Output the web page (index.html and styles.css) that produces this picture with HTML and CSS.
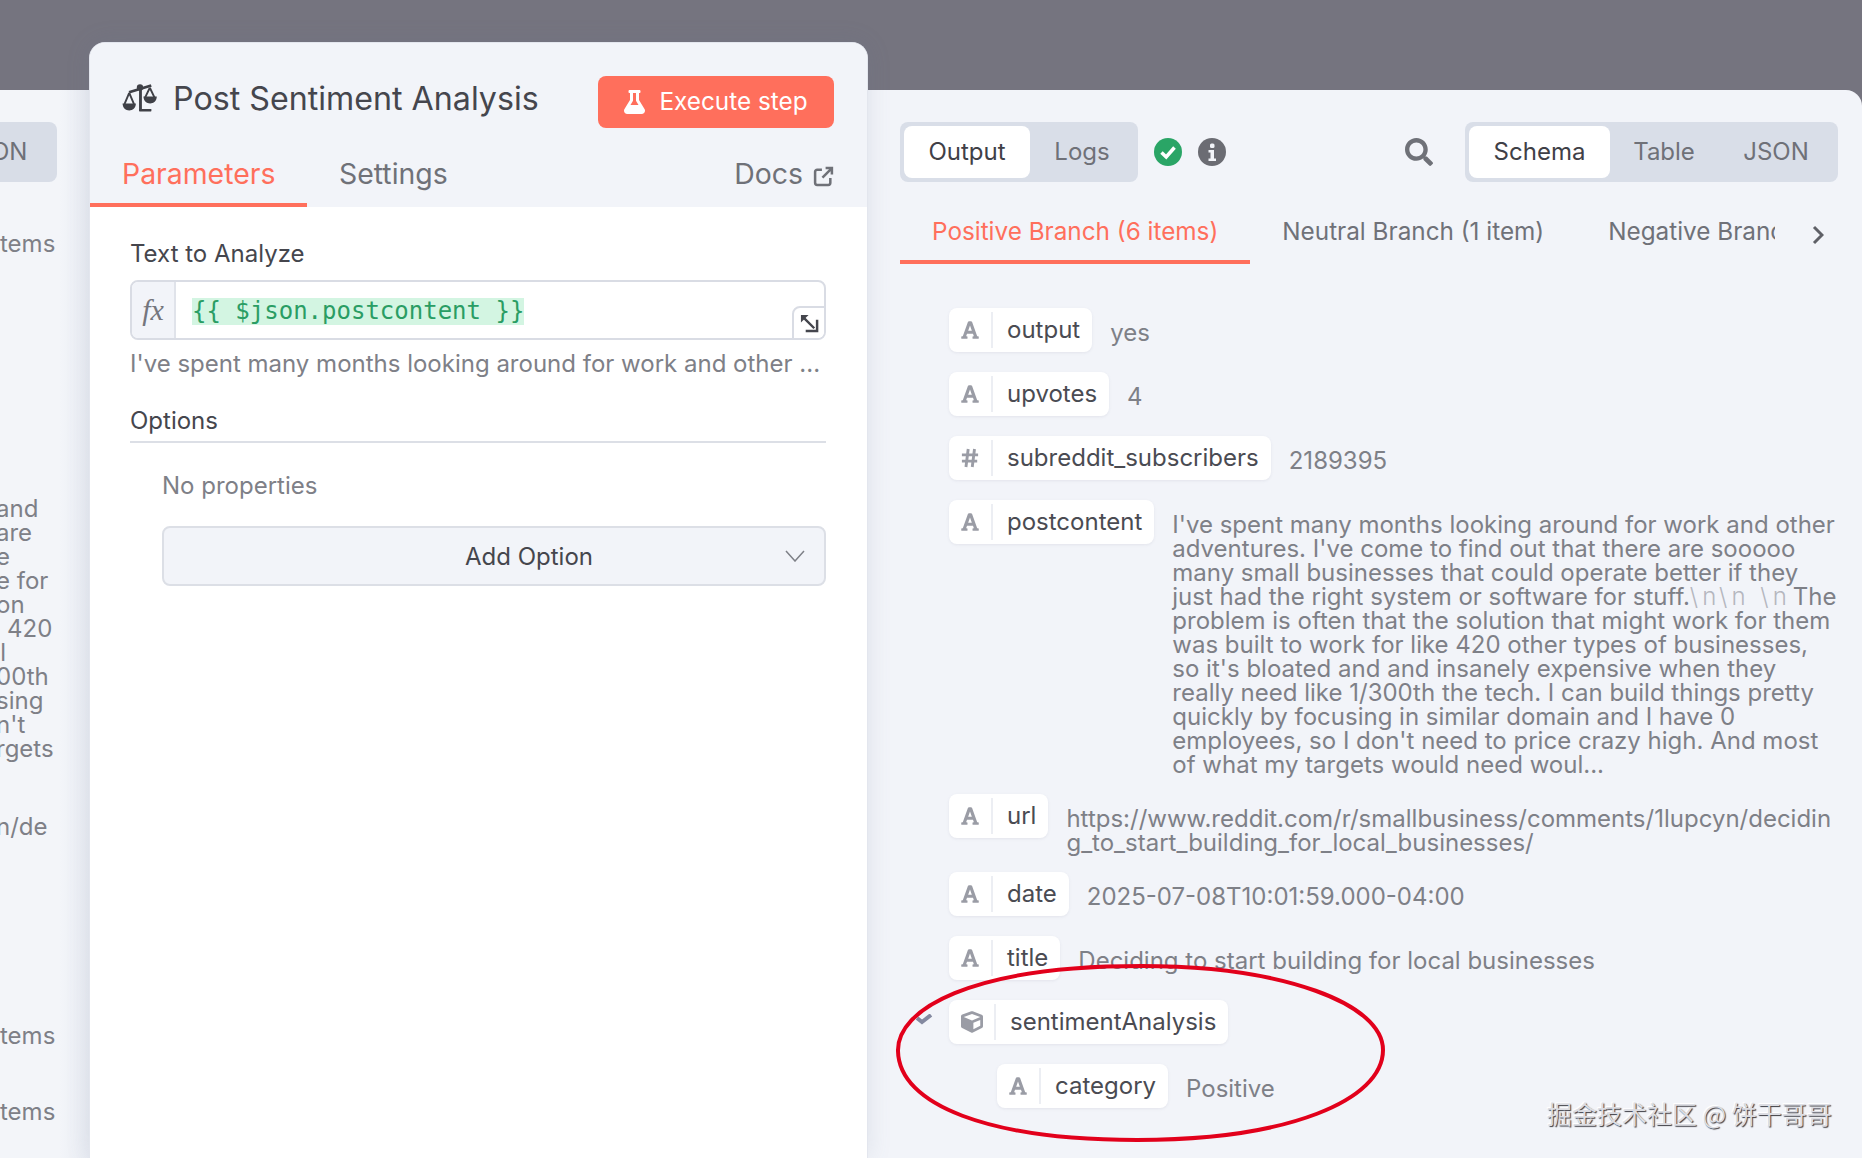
FILE: index.html
```html
<!DOCTYPE html>
<html lang="en">
<head>
<meta charset="utf-8">
<title>Post Sentiment Analysis</title>
<link rel="stylesheet" href="styles.css">
</head>
<body>
<svg class="defs" width="0" height="0" aria-hidden="true">
  <symbol id="i-font" viewBox="0 0 448 512"><path d="M432 416h-23.41L277.88 53.69A32 32 0 0 0 247.58 32h-47.16a32 32 0 0 0-30.3 21.69L39.41 416H16a16 16 0 0 0-16 16v32a16 16 0 0 0 16 16h128a16 16 0 0 0 16-16v-32a16 16 0 0 0-16-16h-19.58l23.3-64h152.56l23.3 64H304a16 16 0 0 0-16 16v32a16 16 0 0 0 16 16h128a16 16 0 0 0 16-16v-32a16 16 0 0 0-16-16zM176.85 272L224 142.51 271.15 272z"/></symbol>
  <symbol id="i-hash" viewBox="0 0 20 22"><path d="M8 1 5.500 21M15 1 12.500 21M1 7.500H19M1 14.500H18" fill="none" stroke="currentColor" stroke-width="3.200"/></symbol>
  <symbol id="i-cube" viewBox="0 0 512 512"><path d="M239.100 6.300l-208 78c-18.700 7-31.100 25-31.100 45v225.100c0 18.200 10.300 34.800 26.500 42.900l208 104c13.500 6.800 29.400 6.800 42.900 0l208-104c16.300-8.100 26.500-24.800 26.500-42.900V129.300c0-20-12.400-37.900-31.100-44.900l-208-78C262 2.200 250 2.200 239.100 6.300zM256 68.400l192 72v1.100l-192 78-192-78v-1.100l192-72zm32 356V275.500l160-65v133.900l-160 80z"/></symbol>
</svg>

<div class="app">
  <aside class="left">
    <div class="left-pill"><span>ON</span></div>
    <div class="left-frag items-1">tems</div>
    <div class="left-lines">and
are
e
e for
on
 &thinsp;420
&thinsp;l
00th
sing
n't
rgets</div>
    <div class="left-frag path">n/de</div>
    <div class="left-frag items-2">tems</div>
    <div class="left-frag items-3">tems</div>
  </aside>

  <section class="center">
    <header class="center-head">
      <div class="title-row">
        <div class="title">
          <svg class="scale-icon" viewBox="0 0 120 96" aria-hidden="true">
            <path d="M24 24 94 3 97 11 27 32Z"/>
            <circle cx="60" cy="13" r="10"/>
            <rect x="57" y="14" width="9" height="72"/>
            <rect x="57" y="81" width="39" height="8" rx="2"/>
            <path class="scale-line" d="M26 30 11 66M26 30 41 66M91 14 76 45M91 14 106 45"/>
            <path d="M5 64H47C47 93 5 93 5 64ZM71 42H113C113 71 71 71 71 42Z"/>
          </svg>
          <span>Post Sentiment Analysis</span>
        </div>
        <button class="exec-btn">
          <svg class="flask" viewBox="0 0 448 512" aria-hidden="true"><path d="M437.200 403.500L320 215V64h8c13.300 0 24-10.700 24-24V24c0-13.300-10.700-24-24-24H120c-13.300 0-24 10.700-24 24v16c0 13.300 10.700 24 24 24h8v151L10.800 403.500C-18.500 450.600 15.300 512 70.900 512h306.200c55.700 0 89.400-61.500 60.100-108.500zM137.900 320l48.200-77.600c3.700-5.200 5.800-11.600 5.800-18.400V64h64v160c0 6.900 2.200 13.200 5.800 18.400l48.200 77.600h-172z"/></svg>
          <span>Execute step</span>
        </button>
      </div>
      <nav class="center-tabs">
        <span class="ctab active">Parameters</span>
        <span class="ctab">Settings</span>
        <span class="docs">Docs
          <svg class="ext" viewBox="0 0 20 20" aria-hidden="true"><path d="M8.500 3.500H4A2 2 0 0 0 2 5.500V16A2 2 0 0 0 4 18H14.500A2 2 0 0 0 16.500 16V11.500M9 11 18 2M12 2H18V8"/></svg>
        </span>
      </nav>
    </header>
    <div class="center-body">
      <label class="field-label">Text to Analyze</label>
      <div class="expr">
        <div class="fx">fx</div>
        <div class="expr-value"><span class="expr-code">{{ $json.postcontent }}</span></div>
        <div class="expand">
          <svg viewBox="0 0 20 20" aria-hidden="true"><path class="exp-head" d="M1 1H9L1 9Z"/><path d="M3 3 15 15M18 6V18H6"/></svg>
        </div>
      </div>
      <div class="hint">I've spent many months looking around for work and other ...</div>
      <div class="options-title">Options</div>
      <div class="options-body">
        <div class="no-props">No properties</div>
        <div class="add-option">
          <span>Add Option</span>
          <svg class="caret" viewBox="0 0 20 12" aria-hidden="true"><path d="M1 1 10 11 19 1"/></svg>
        </div>
      </div>
    </div>
  </section>

  <section class="right">
    <div class="toolbar">
      <div class="seg">
        <span class="seg-item on seg-output">Output</span>
        <span class="seg-item seg-logs">Logs</span>
      </div>
      <svg class="status" viewBox="0 0 28 28" aria-hidden="true"><circle class="ok" cx="14" cy="14" r="14"/><path class="tick" d="M7.500 14.500 12.200 19 20.500 9.500"/></svg>
      <svg class="status info" viewBox="0 0 28 28" aria-hidden="true"><circle cx="14" cy="14" r="14"/><rect class="dot" x="12" y="5.500" width="4.500" height="4.500" rx="1.500"/><path class="dot" d="M10.500 12h5.500v8.500h2v2.500h-7.500v-2.500h2v-6h-2Z"/></svg>
      <svg class="search" viewBox="0 0 512 512" aria-hidden="true"><path d="M505 442.700L405.300 343c-4.500-4.500-10.600-7-17-7H372c27.600-35.300 44-79.700 44-128C416 93.100 322.900 0 208 0S0 93.100 0 208s93.100 208 208 208c48.300 0 92.700-16.400 128-44v16.300c0 6.400 2.500 12.500 7 17l99.700 99.700c9.400 9.400 24.600 9.400 33.900 0l28.300-28.300c9.400-9.400 9.400-24.600.1-34zM208 336c-70.700 0-128-57.200-128-128 0-70.700 57.200-128 128-128 70.700 0 128 57.200 128 128 0 70.700-57.200 128-128 128z"/></svg>
      <div class="seg">
        <span class="seg-item on seg-schema">Schema</span>
        <span class="seg-item seg-table">Table</span>
        <span class="seg-item seg-json">JSON</span>
      </div>
    </div>

    <div class="branches">
      <span class="branch active">Positive Branch (6 items)</span>
      <div class="branch-clip">
        <span class="branch">Neutral Branch (1 item)</span>
        <span class="branch">Negative Branch (3 items)</span>
      </div>
      <svg class="branch-next" viewBox="0 0 12 20" aria-hidden="true"><path d="M2 2 10 10 2 18"/></svg>
    </div>

    <div class="schema">
      <div class="row">
        <div class="key"><span class="key-icon"><svg><use href="#i-font"/></svg></span><span class="key-name">output</span></div>
        <div class="val">yes</div>
      </div>
      <div class="row">
        <div class="key"><span class="key-icon"><svg><use href="#i-font"/></svg></span><span class="key-name">upvotes</span></div>
        <div class="val">4</div>
      </div>
      <div class="row">
        <div class="key"><span class="key-icon"><svg><use href="#i-hash"/></svg></span><span class="key-name">subreddit_subscribers</span></div>
        <div class="val">2189395</div>
      </div>
      <div class="row">
        <div class="key"><span class="key-icon"><svg><use href="#i-font"/></svg></span><span class="key-name">postcontent</span></div>
        <div class="val">I've spent many months looking around for work and other adventures. I've come to find out that there are sooooo many small businesses that could operate better if they just had the right system or software for stuff.<span class="nl">\n\n \n</span>The problem is often that the solution that might work for them was built to work for like 420 other types of businesses, so it's bloated and and insanely expensive when they really need like 1/300th the tech. I can build things pretty quickly by focusing in similar domain and I have 0 employees, so I don't need to price crazy high. And most of what my targets would need woul...</div>
      </div>
      <div class="row">
        <div class="key"><span class="key-icon"><svg><use href="#i-font"/></svg></span><span class="key-name">url</span></div>
        <div class="val breakall">https://www.reddit.com/r/smallbusiness/comments/1lupcyn/deciding_to_start_building_for_local_businesses/</div>
      </div>
      <div class="row">
        <div class="key"><span class="key-icon"><svg><use href="#i-font"/></svg></span><span class="key-name">date</span></div>
        <div class="val">2025-07-08T10:01:59.000-04:00</div>
      </div>
      <div class="row">
        <div class="key"><span class="key-icon"><svg><use href="#i-font"/></svg></span><span class="key-name">title</span></div>
        <div class="val">Deciding to start building for local businesses</div>
      </div>
      <div class="row object">
        <svg class="toggle" viewBox="0 0 17 11" aria-hidden="true"><path d="M1 4 6 8 15 1"/></svg>
        <div class="key"><span class="key-icon wide"><svg><use href="#i-cube"/></svg></span><span class="key-name">sentimentAnalysis</span></div>
      </div>
      <div class="row nested">
        <div class="key"><span class="key-icon"><svg><use href="#i-font"/></svg></span><span class="key-name">category</span></div>
        <div class="val">Positive</div>
      </div>
    </div>
  </section>
</div>

<svg class="annotation" viewBox="0 0 500 190" aria-hidden="true"><path d="M9 91C8 50 80 6 252 6C395 6 494 44 494 90C494 140 400 180 248 180C100 180 10 145 9 91Z"/></svg>
<div class="watermark">掘金技术社区 @ 饼干哥哥</div>
</body>
</html>
```
FILE: styles.css
```css
* { box-sizing: border-box; }
html, body { margin: 0; height: 100%; }
body {
  position: relative;
  width: 1862px;
  height: 1158px;
  overflow: hidden;
  background: #75747f;
  font-family: Inter, "Noto Sans", sans-serif;
  font-size: 24px;
  color: #4a4b52;
}
.defs { position: absolute; }
.app {
  display: grid;
  grid-template-columns: 89px 779px 1fr;
  height: 1158px;
}

/* left strip */
.left {
  margin-top: 90px;
  background: linear-gradient(90deg, #f3f5f9 0, #f3f5f9 60px, #e9ecf3 89px);
  overflow: hidden;
  color: #7e8087;
  line-height: 24px;
  display: flex;
  flex-direction: column;
}
.left-pill {
  margin: 32px 32px 0 -20px;
  height: 60px;
  border-radius: 8px;
  background: #d8dde7;
  padding-left: 20px;
  display: flex;
  align-items: center;
  flex: none;
}
.left-pill span { margin-left: -9px; color: #6f7178; }
.left-frag { white-space: pre; flex: none; }
.items-1 { margin-top: 50px; }
.left-lines { margin: 241px 0 0 -4px; white-space: pre; flex: none; }
.path { margin-top: 54px; margin-left: -4px; }
.items-2 { margin-top: 185px; }
.items-3 { margin-top: 52px; }

/* center */
.center {
  margin-top: 42px;
  background: #fff;
  border: 1px solid #e3e6ee;
  border-bottom: 0;
  border-radius: 16px 16px 0 0;
  display: flex;
  flex-direction: column;
  box-shadow: 0 0 24px rgba(100, 110, 140, .14);
  position: relative;
  z-index: 1;
}
.center-head { background: #f2f4f9; border-radius: 15px 15px 0 0; height: 164px; flex: none; }
.title-row {
  display: flex;
  justify-content: space-between;
  padding: 33px 33px 0 32px;
}
.title { display: flex; align-items: center; gap: 14px; height: 44px; font-size: 32.200px; color: #45464d; }
.scale-icon { width: 38px; height: 31px; margin-left: -1px; fill: #3f4047; }
.scale-line { fill: none; stroke: #3f4047; stroke-width: 6; }
.exec-btn {
  width: 236px;
  height: 52px;
  border: 0;
  border-radius: 8px;
  background: #ff6f5c;
  color: #fff;
  font: inherit;
  font-size: 24.300px;
  display: flex;
  align-items: center;
  justify-content: center;
  gap: 14px;
}
.exec-btn span { margin-top: -2px; }
.flask { width: 21px; height: 24px; fill: #fff; }
.center-tabs { display: flex; align-items: flex-start; margin-top: 26px; font-size: 28.400px; color: #6f7178; height: 53px; }
.ctab { height: 53px; line-height: 40px; }
.ctab.active { color: #ff6f5c; padding: 0 32px; width: 217px; border-bottom: 4px solid #ff6f5c; }
.ctab:not(.active) { margin-left: 32px; }
.docs { margin-left: auto; margin-right: 33px; line-height: 40px; display: flex; align-items: center; gap: 10px; }
.ext { width: 21px; height: 21px; margin-top: 5px; fill: none; stroke: #6f7178; stroke-width: 2.400; }

.center-body { padding: 31px 41px 0 40px; }
.field-label { display: block; line-height: 32px; color: #45464d; }
.expr {
  display: flex;
  margin-top: 10px;
  height: 60px;
  border: 2px solid #d9dce4;
  border-radius: 8px;
  position: relative;
  overflow: hidden;
}
.fx {
  width: 44px;
  background: #f2f4f9;
  border-right: 2px solid #e0e3ea;
  font-family: "Liberation Serif", serif;
  font-style: italic;
  font-size: 30px;
  color: #75767d;
  display: flex;
  align-items: center;
  justify-content: center;
}
.expr-value { padding: 14px 0 0 16px; flex: 1; }
.expr-code {
  display: inline-block;
  height: 27px;
  line-height: 27px;
  background: #d3f5e2;
  color: #2a9d64;
  font-family: "DejaVu Sans Mono", monospace;
  font-size: 24px;
}
.expand {
  position: absolute;
  right: -2px;
  bottom: -2px;
  width: 34px;
  height: 34px;
  background: #fff;
  border: 2px solid #d9dce4;
  border-radius: 8px 0 0 0;
  display: flex;
  align-items: center;
  justify-content: center;
}
.expand svg { width: 19px; height: 19px; fill: none; stroke: #45464d; stroke-width: 2.600; }
.expand .exp-head { fill: #45464d; stroke: none; }
.hint { margin-top: 10px; line-height: 28px; color: #7e8087; }
.options-title { margin-top: 27px; line-height: 32px; padding-bottom: 4px; border-bottom: 2px solid #dcdfe6; color: #45464d; }
.options-body { padding: 23px 0 0 32px; }
.no-props { line-height: 40px; color: #7e8087; }
.add-option {
  margin-top: 20px;
  height: 60px;
  border: 2px solid #dcdfe6;
  border-radius: 8px;
  background: #f2f4f9;
  display: flex;
  align-items: center;
  padding: 0 19px 0 301px;
  justify-content: space-between;
  color: #45464d;
}
.caret { width: 20px; height: 12px; fill: none; stroke: #7e8087; stroke-width: 1.500; }

/* right */
.right {
  margin-top: 90px;
  background: #f2f4f9;
  border-radius: 0 16px 0 0;
  padding: 32px 24px 0 32px;
  min-width: 0;
}
.toolbar { display: flex; align-items: center; height: 60px; }
.seg {
  display: flex;
  align-items: center;
  height: 60px;
  padding: 4px;
  border-radius: 8px;
  background: #d9deE8;
  flex: none;
}
.seg-item { height: 52px; line-height: 52px; color: #6f7178; text-align: center; flex: none; }
.seg-item.on { background: #fff; border-radius: 8px; color: #3f4047; }
.seg-output { width: 126px; }
.seg-logs { width: 104px; }
.seg-schema { width: 141px; }
.seg-table { width: 108px; }
.seg-json { width: 116px; }
.status { width: 28px; height: 28px; margin-left: 16px; flex: none; }
.ok { fill: #2aa566; }
.tick { fill: none; stroke: #fff; stroke-width: 3.500; }
.status.info { margin-left: 16px; fill: #6b6c73; }
.dot { fill: #f2f4f9; }
.search { width: 28px; height: 28px; margin-left: auto; margin-right: 32px; fill: #6f7178; flex: none; }

.branches { display: flex; align-items: flex-start; margin-top: 20px; height: 62px; font-size: 24.300px; color: #6f7178; }
.branch { display: inline-block; line-height: 58px; white-space: nowrap; }
.branch.active { color: #ff6f5c; padding: 0 32px; border-bottom: 4px solid #ff6f5c; height: 62px; flex: none; }
.branch-clip { display: flex; gap: 64px; width: 493px; margin-left: 32px; overflow: hidden; }
.branch-next { width: 12px; height: 20px; margin: 23px 0 0 37px; fill: none; stroke: #5f6067; stroke-width: 3; flex: none; }

.schema { margin-top: 44px; margin-right: -2px; padding-left: 49px; line-height: 24px; }
.row { display: flex; align-items: flex-start; position: relative; gap: 18px; min-height: 64px; }
.key {
  display: flex;
  align-items: center;
  height: 44px;
  background: #fff;
  border-radius: 8px;
  box-shadow: 0 1px 3px rgba(120, 125, 150, .12);
  flex: none;
}
.key-icon {
  width: 44px;
  height: 36px;
  border-right: 2px solid #eceef3;
  display: flex;
  align-items: center;
  justify-content: center;
  color: #9a9ca5;
  flex: none;
}
.key-icon.wide { width: 47px; }
.key-icon svg { width: 18px; height: 20px; fill: currentColor; }
.key-icon.wide svg { width: 22px; height: 22px; }
.key-name { padding: 0 12px 0 14px; color: #4a4b52; margin-top: 0; }
.val { flex: 1; min-width: 0; margin-top: 13px; margin-bottom: 17px; color: #7e8087; }
.nl { color: #b5b7bf; font-weight: 300; letter-spacing: 4px; margin-right: 2px; white-space: nowrap; }
.breakall { word-break: break-all; }
.toggle { position: absolute; left: -33px; top: 14px; width: 17px; height: 11px; fill: none; stroke: #8489a0; stroke-width: 4; }
.nested { margin-left: 48px; }

/* overlays */
.annotation {
  position: absolute;
  left: 889px;
  top: 960px;
  width: 500px;
  height: 190px;
  fill: none;
  stroke: #e2001b;
  stroke-width: 4;
  z-index: 3;
}
.watermark {
  position: absolute;
  left: 1547px;
  top: 1098px;
  font-family: "Noto Sans CJK SC", sans-serif;
  font-size: 25px;
  line-height: 30px;
  color: #dcdde3;
  text-shadow: 1px 1px 1px #3c3c42, -1px -1px 1px #fff;
  z-index: 3;
  white-space: nowrap;
}
```
